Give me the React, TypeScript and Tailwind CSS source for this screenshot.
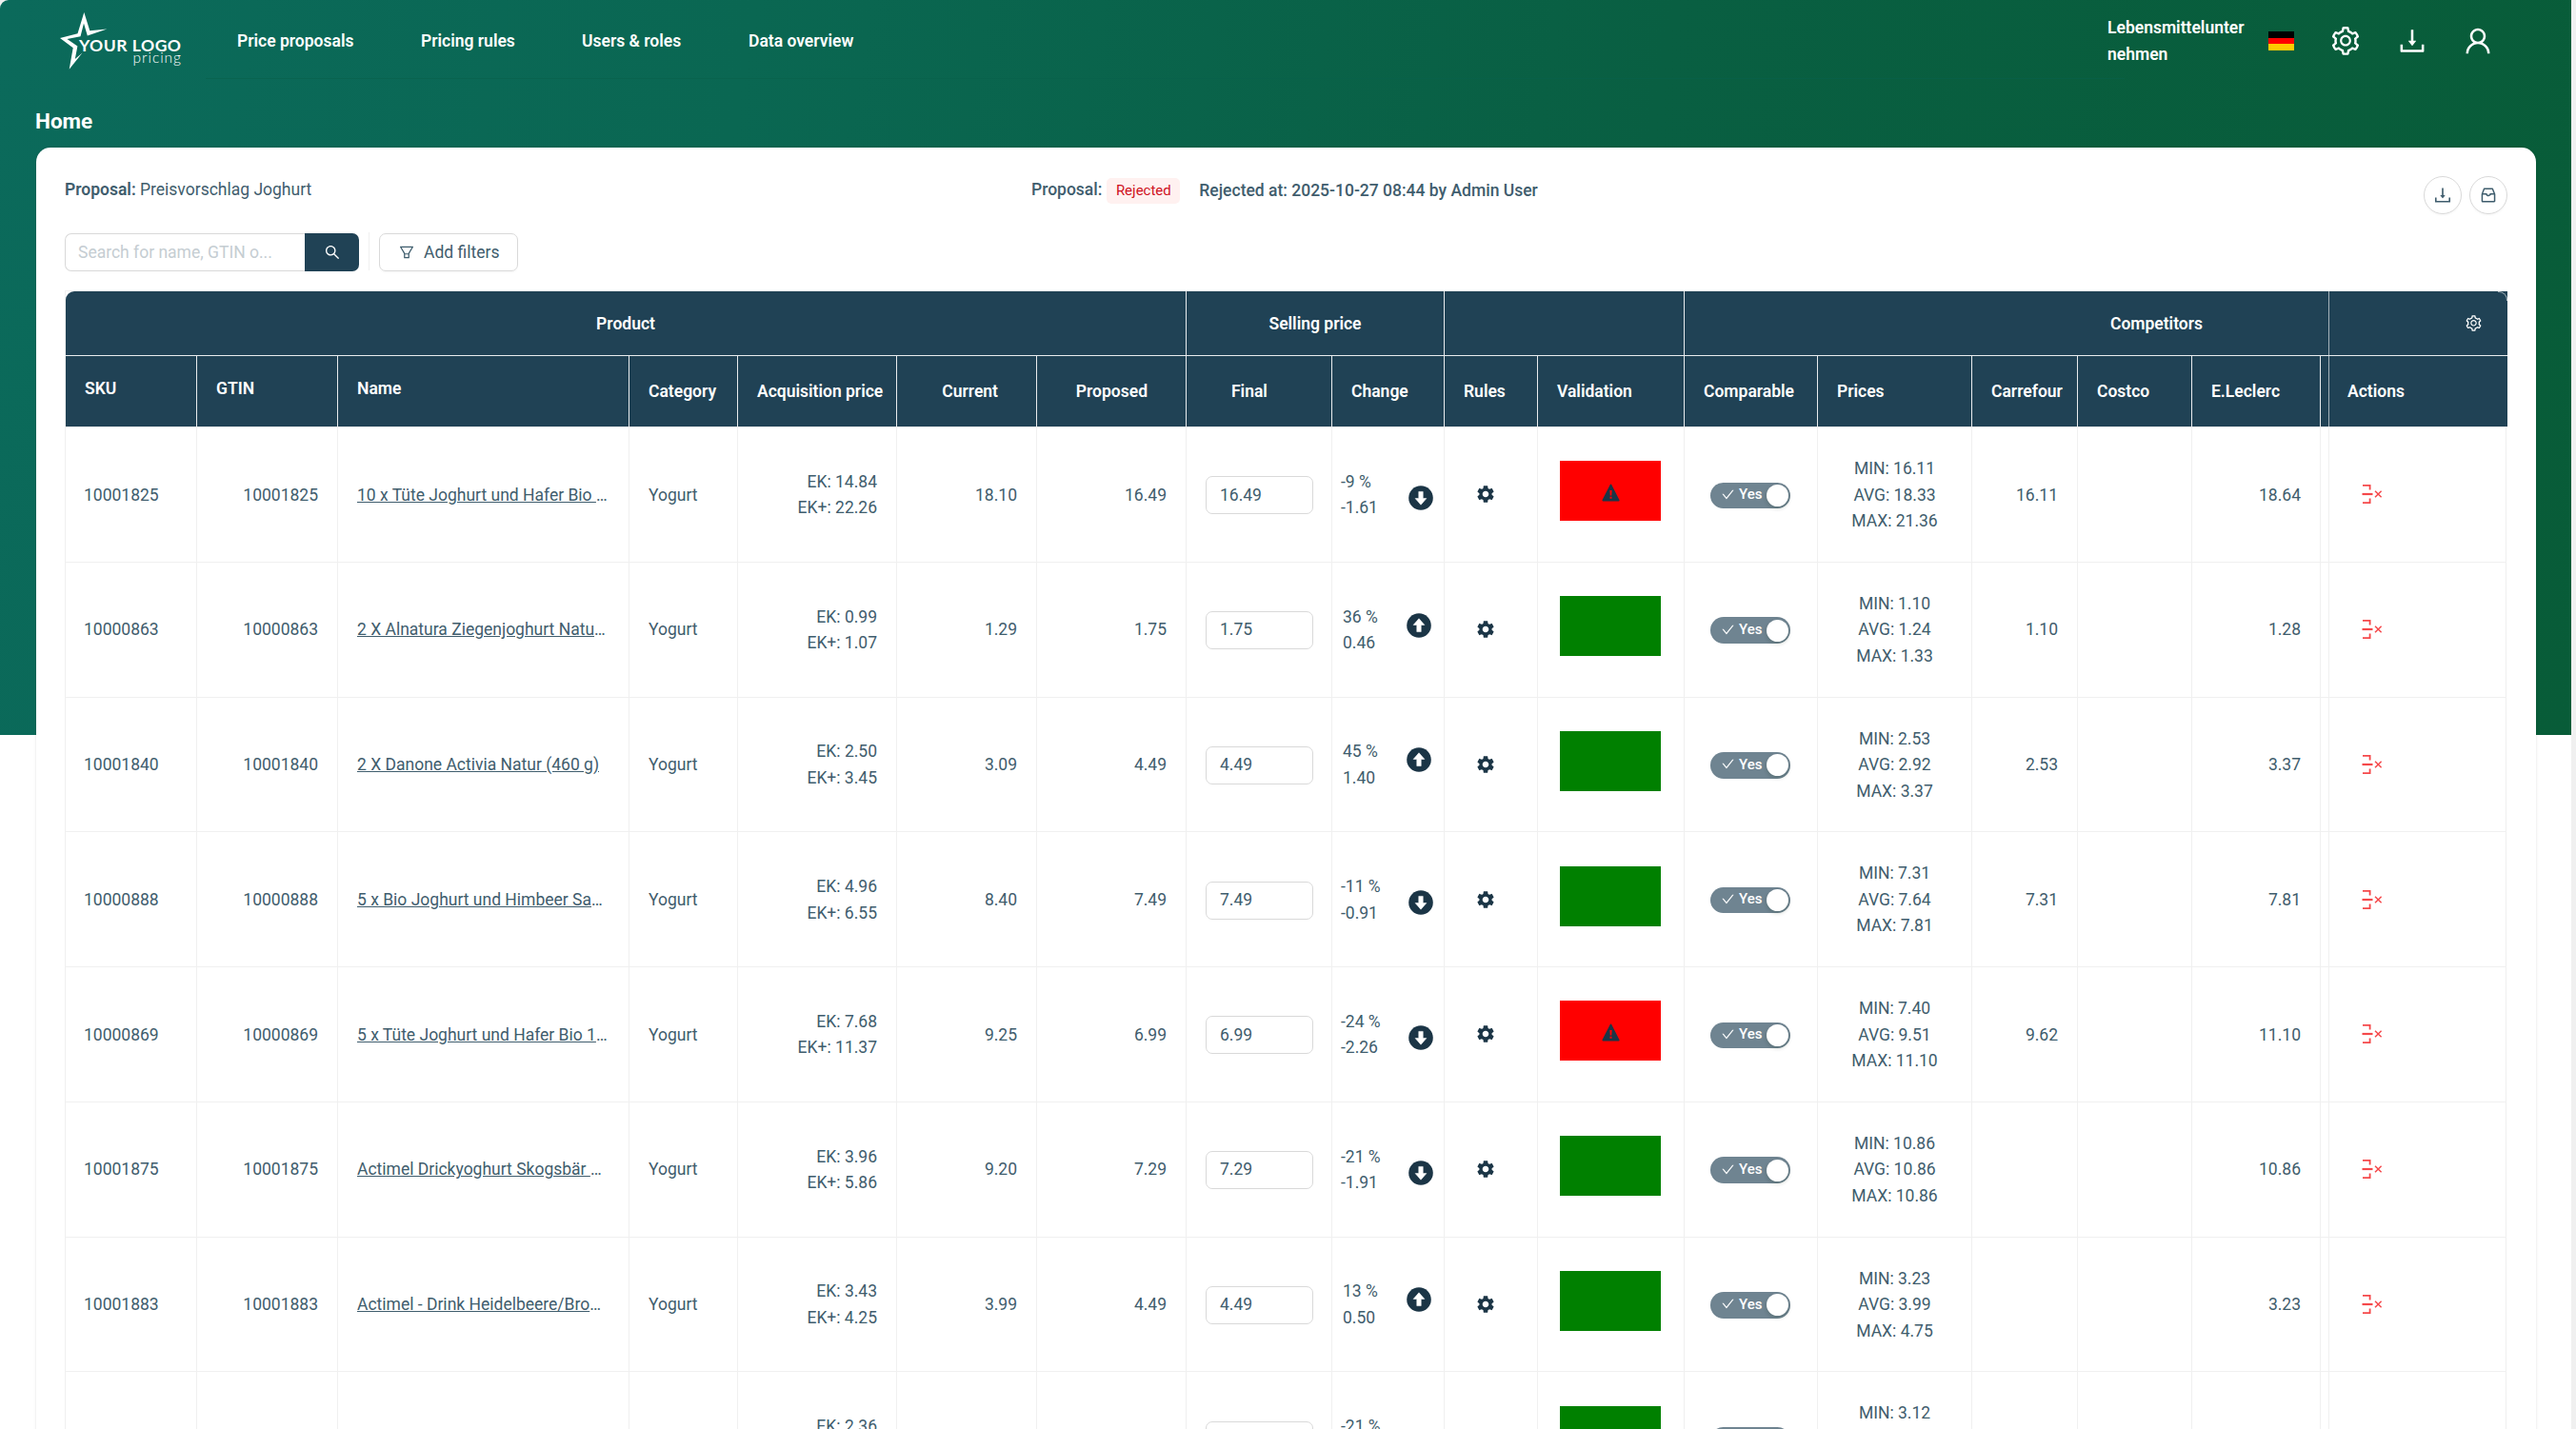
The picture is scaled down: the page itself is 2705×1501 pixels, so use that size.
import type { ReactNode } from "react";
import {
  AiOutlineCheck,
  AiOutlineDownload,
  AiOutlineFilter,
  AiOutlineInbox,
  AiOutlineSearch,
  AiOutlineSetting,
  AiOutlineUser,
} from "react-icons/ai";
import { MdSettings } from "react-icons/md";

type Row = {
  sku: string;
  name: string;
  ek: string;
  ekPlus: string;
  current: string;
  proposed: string;
  percent: string;
  diff: string;
  valid: boolean;
  min: string;
  avg: string;
  max: string;
  carrefour: string;
  leclerc: string;
};

const rows: Row[] = [
  { sku: "10001825", name: "10 x Tüte Joghurt und Hafer Bio ", ek: "14.84", ekPlus: "22.26", current: "18.10", proposed: "16.49", percent: "-9 %", diff: "-1.61", valid: false, min: "16.11", avg: "18.33", max: "21.36", carrefour: "16.11", leclerc: "18.64" },
  { sku: "10000863", name: "2 X Alnatura Ziegenjoghurt Natu", ek: "0.99", ekPlus: "1.07", current: "1.29", proposed: "1.75", percent: "36 %", diff: "0.46", valid: true, min: "1.10", avg: "1.24", max: "1.33", carrefour: "1.10", leclerc: "1.28" },
  { sku: "10001840", name: "2 X Danone Activia Natur (460 g)", ek: "2.50", ekPlus: "3.45", current: "3.09", proposed: "4.49", percent: "45 %", diff: "1.40", valid: true, min: "2.53", avg: "2.92", max: "3.37", carrefour: "2.53", leclerc: "3.37" },
  { sku: "10000888", name: "5 x Bio Joghurt und Himbeer Sa", ek: "4.96", ekPlus: "6.55", current: "8.40", proposed: "7.49", percent: "-11 %", diff: "-0.91", valid: true, min: "7.31", avg: "7.64", max: "7.81", carrefour: "7.31", leclerc: "7.81" },
  { sku: "10000869", name: "5 x Tüte Joghurt und Hafer Bio 1", ek: "7.68", ekPlus: "11.37", current: "9.25", proposed: "6.99", percent: "-24 %", diff: "-2.26", valid: false, min: "7.40", avg: "9.51", max: "11.10", carrefour: "9.62", leclerc: "11.10" },
  { sku: "10001875", name: "Actimel Drickyoghurt Skogsbär ", ek: "3.96", ekPlus: "5.86", current: "9.20", proposed: "7.29", percent: "-21 %", diff: "-1.91", valid: true, min: "10.86", avg: "10.86", max: "10.86", carrefour: "", leclerc: "10.86" },
  { sku: "10001883", name: "Actimel - Drink Heidelbeere/Bro", ek: "3.43", ekPlus: "4.25", current: "3.99", proposed: "4.49", percent: "13 %", diff: "0.50", valid: true, min: "3.23", avg: "3.99", max: "4.75", carrefour: "", leclerc: "3.23" },
  { sku: "", name: "", ek: "2.36", ekPlus: "", current: "", proposed: "", percent: "-21 %", diff: "", valid: true, min: "3.12", avg: "", max: "", carrefour: "", leclerc: "" },
];

const columns =
  "grid grid-cols-[138px_148px_306px_114px_167px_147px_157px_153px_118px_98px_154px_140px_162px_111px_120px_135px_9px_186px]";

export default function App() {
  return (
    <div className="flex h-[1501px] w-[2705px] overflow-hidden bg-[#f0f0f0] font-['Roboto',sans-serif] text-[17.5px] leading-[27.5px] text-[#3f5d6d]">
      <div className="flex w-[2700px] shrink-0 flex-col overflow-hidden rounded-tl-[9px] bg-white bg-[linear-gradient(100deg,#0b6a5b_0%,#0a6752_28%,#095f42_62%,#085c38_100%)] bg-[length:100%_772px] bg-no-repeat">
        <Header />
        <h1 className="mt-[29px] ml-[37px] h-[32px] text-[22.5px] leading-[32px] font-bold text-white">Home</h1>
        <main className="mt-[12px] ml-[38px] h-[1500px] w-[2625px] shrink-0 rounded-t-[15px] bg-white pl-[30px] shadow-[0_0_3px_rgba(0,0,0,0.12)]">
          <ProposalBar />
          <Toolbar />
          <PriceTable />
        </main>
      </div>
    </div>
  );
}

function Header() {
  return (
    <header className="flex h-[82px] shrink-0 items-start pl-[58px] text-white">
      <Logo />
      <nav className="flex h-[83px] w-[2015px] items-center border-b border-[#08604b]/60 pt-[5px] pl-[33px] font-semibold">
        <a className="w-[193px]">Price proposals</a>
        <a className="w-[169px]">Pricing rules</a>
        <a className="w-[175px]">Users &amp; roles</a>
        <a>Data overview</a>
      </nav>
      <div className="-ml-[18px] flex h-[86px] items-center">
        <div className="w-[169px] leading-[28px] font-semibold">
          Lebensmittelunter
          <br />
          nehmen
        </div>
        <Flag />
        <AiOutlineSetting className="ml-[37px] size-[34px]" />
        <AiOutlineDownload className="ml-[36px] size-[34px]" />
        <AiOutlineUser className="ml-[35px] size-[34px]" />
      </div>
    </header>
  );
}

function Logo() {
  return (
    <svg width="158" height="82" viewBox="0 0 158 82" fill="#fff">
      <path d="M5 40L23.5 35.2L30.3 13L36.3 32.3L54.3 30.6L33.8 37.4L30 24.5L26.5 38.3L12.5 41L23.4 48.5L20.8 62L28.5 55.5L14.7 72.8L18.7 50.2Z" />
      <text x="25" y="53.5" textLength="107" className="font-['Lato'] text-[17.5px] font-bold">YOUR LOGO</text>
      <text x="81.5" y="65.5" textLength="50.5" className="font-['Lato'] text-[15.5px] font-light">pricing</text>
    </svg>
  );
}

function Flag() {
  return (
    <div className="flex h-[20px] w-[27px] flex-col">
      <div className="flex-1 bg-black" />
      <div className="flex-1 bg-[#f00]" />
      <div className="flex-1 bg-[#fc0]" />
    </div>
  );
}

function ProposalBar() {
  return (
    <div className="flex h-[90px] items-start pt-[30px]">
      <div className="w-[1015px] pt-px">
        <b className="font-semibold">Proposal:</b> Preisvorschlag Joghurt
      </div>
      <div className="flex w-[1462px] pt-px font-medium">
        <span>Proposal:</span>
        <span className="mt-[1px] ml-[5px] h-[27px] w-[77px] rounded-[5px] bg-[#fff1f0] text-center text-[15px] leading-[26px] font-normal text-[#cf1322]">
          Rejected
        </span>
        <span className="ml-[20px] pt-px">Rejected at: 2025-10-27 08:44 by Admin User</span>
      </div>
      <div className="flex gap-2">
        <RoundButton>
          <AiOutlineDownload className="size-[22px]" />
        </RoundButton>
        <RoundButton>
          <AiOutlineInbox className="size-[20px]" />
        </RoundButton>
      </div>
    </div>
  );
}

function RoundButton({ children }: { children: ReactNode }) {
  return (
    <button className="flex size-[40px] items-center justify-center rounded-full border border-[#d9d9d9] bg-white shadow-[0_2px_0_rgba(0,0,0,0.02)]">
      {children}
    </button>
  );
}

function Toolbar() {
  return (
    <div className="flex h-[60px] items-start">
      <div className="flex h-[40px] w-[252px] items-center rounded-l-[7px] border border-r-0 border-[#d9d9d9] pt-px pl-[13px] text-[#c5cdd2]">
        Search for name, GTIN o...
      </div>
      <button className="flex h-[40px] w-[57px] items-center justify-center rounded-r-[7px] bg-[#204255] text-white">
        <AiOutlineSearch className="size-[18px]" />
      </button>
      <div className="mt-[-1px] ml-[10px] h-[40px] w-px bg-[#f0f0f0]" />
      <button className="ml-[10px] flex h-[40px] w-[146px] items-center rounded-[7px] border border-[#d9d9d9] pl-[19px] shadow-[0_2px_0_rgba(0,0,0,0.02)]">
        <AiOutlineFilter className="size-[18px]" />
        <span className="mt-px ml-[9px]">Add filters</span>
      </button>
    </div>
  );
}

function PriceTable() {
  return (
    <div className="relative w-[2565px] border-t border-l border-[#f0f0f0]">
      <div className="w-[2564px] rounded-tl-[9px] bg-[#204255] font-semibold text-white">
        <div className="flex h-[68px] border-b border-white/90 text-center leading-[68px]">
          <div className="w-[1177px] border-r border-white/90">Product</div>
          <div className="w-[271px] border-r border-white/90">Selling price</div>
          <div className="w-[252px] border-r border-white/90" />
          <div className="w-[677px] border-r border-white/60 pl-[315px]">Competitors</div>
          <div className="flex flex-1 items-center justify-end pr-[26px]">
            <AiOutlineSetting className="size-[19px]" />
          </div>
        </div>
        <div className={`${columns} h-[75px] border-b border-[#f0f0f0]`}>
          <HeadCell raised>SKU</HeadCell>
          <HeadCell raised>GTIN</HeadCell>
          <HeadCell raised>Name</HeadCell>
          <HeadCell>Category</HeadCell>
          <HeadCell>Acquisition price</HeadCell>
          <HeadCell right>Current</HeadCell>
          <HeadCell right>Proposed</HeadCell>
          <div className="flex items-center border-r border-white/90 pt-px pl-[47px]">Final</div>
          <HeadCell>Change</HeadCell>
          <HeadCell>Rules</HeadCell>
          <HeadCell>Validation</HeadCell>
          <HeadCell>Comparable</HeadCell>
          <HeadCell>Prices</HeadCell>
          <HeadCell>Carrefour</HeadCell>
          <HeadCell>Costco</HeadCell>
          <HeadCell>E.Leclerc</HeadCell>
          <div className="border-r border-white/60" />
          <div className="flex items-center pt-px pl-[19px]">Actions</div>
        </div>
      </div>
      <div className="absolute top-0 right-0 size-[10px] rounded-tr-[9px] border-t border-r border-white/60" />
      {rows.map((row, i) => (
        <TableRow key={i} row={row} />
      ))}
    </div>
  );
}

function HeadCell({ children, raised, right }: { children: ReactNode; raised?: boolean; right?: boolean }) {
  return (
    <div
      className={`flex items-center border-r border-white/90 whitespace-nowrap ${raised ? "pb-[5px]" : "pt-px"} ${
        right ? "justify-end pr-[40px]" : "pl-[20px]"
      }`}
    >
      {children}
    </div>
  );
}

function Cell({ children, className = "" }: { children?: ReactNode; className?: string }) {
  return <div className={`flex items-center border-r border-b border-[#f0f0f0] ${className}`}>{children}</div>;
}

function TableRow({ row }: { row: Row }) {
  const down = row.percent.startsWith("-");
  const clipped = row.name && !row.name.endsWith("(460 g)");
  return (
    <div className={`${columns} h-[141.75px]`}>
      <Cell className="pt-[2px] pl-[19px]">{row.sku}</Cell>
      <Cell className="justify-end pt-[2px] pr-[20px]">{row.sku}</Cell>
      <Cell className="pt-[2px] pl-[20px] whitespace-pre">
        <span className="underline">{row.name}</span>
        {clipped && "…"}
      </Cell>
      <Cell className="pt-[2px] pl-[20px]">{row.sku && "Yogurt"}</Cell>
      <Cell className="justify-end pt-[2px] pr-[20px] text-right">
        <div>
          <div>EK: {row.ek}</div>
          <div className="h-[27.5px]">{row.ekPlus && `EK+: ${row.ekPlus}`}</div>
        </div>
      </Cell>
      <Cell className="justify-end pt-[2px] pr-[20px]">{row.current}</Cell>
      <Cell className="justify-end pt-[2px] pr-[20px]">{row.proposed}</Cell>
      <Cell className="pt-[2px] pl-[20px]">
        <div className="flex h-[40px] w-[113px] items-center rounded-[7px] border border-[#d9d9d9] pl-[14px]">
          {row.proposed}
        </div>
      </Cell>
      <Cell className={down ? "pt-[2px] pl-[9px]" : "pt-[2px] pl-[11px]"}>
        <div className={down ? "w-[71px]" : "w-[67px]"}>
          <div>{row.percent}</div>
          <div className="h-[27.5px]">{row.diff}</div>
        </div>
        {down ? <ArrowDown /> : <ArrowUp />}
      </Cell>
      <Cell className="justify-center pr-[12px]">
        <MdSettings className="size-[22px] text-[#1b3546]" />
      </Cell>
      <Cell className="pb-[7px] pl-[23px]">
        {row.valid ? (
          <div className="h-[63px] w-[106px] bg-[#008000]" />
        ) : (
          <div className="flex h-[63px] w-[106px] items-center justify-center bg-[#f00] pt-[3px]">
            <WarningIcon />
          </div>
        )}
      </Cell>
      <Cell className="pl-[27px]">
        <Toggle />
      </Cell>
      <Cell className="justify-center pt-[2px] text-center">
        <div>
          <div>MIN: {row.min}</div>
          <div className="h-[27.5px]">{row.avg && `AVG: ${row.avg}`}</div>
          <div className="h-[27.5px]">{row.max && `MAX: ${row.max}`}</div>
        </div>
      </Cell>
      <Cell className="justify-end pt-[2px] pr-[20px]">{row.carrefour}</Cell>
      <Cell />
      <Cell className="justify-end pt-[2px] pr-[20px]">{row.leclerc}</Cell>
      <Cell />
      <Cell className="pl-[34px]">
        <ExcludeIcon />
      </Cell>
    </div>
  );
}

function Toggle() {
  return (
    <div className="mt-[2px] flex h-[27.5px] w-[84px] items-center rounded-full bg-[#6f8491] pr-[2.5px] pl-[11px] text-white">
      <AiOutlineCheck className="mb-[2px] size-[15px]" />
      <span className="mb-px ml-[4px] flex-1 text-[15px] font-medium">Yes</span>
      <span className="size-[23px] rounded-full bg-white shadow-[0_2px_4px_rgba(0,35,11,0.2)]" />
    </div>
  );
}

function ArrowDown() {
  return (
    <svg className="mt-[5px]" width="26" height="26" viewBox="0 0 26 26">
      <circle cx="13" cy="13" r="12.8" fill="#1b3546" />
      <path d="M10.8 6.4h4.4v7.2h3.6L13 20.2L7.2 13.6h3.6z" fill="#fff" stroke="#fff" strokeWidth="0.6" strokeLinejoin="round" />
    </svg>
  );
}

function ArrowUp() {
  return (
    <svg className="mb-[11px]" width="26" height="26" viewBox="0 0 26 26">
      <circle cx="13" cy="13" r="12.8" fill="#1b3546" />
      <path d="M10.8 19.6h4.4v-7.2h3.6L13 5.8L7.2 12.4h3.6z" fill="#fff" stroke="#fff" strokeWidth="0.6" strokeLinejoin="round" />
    </svg>
  );
}

function WarningIcon() {
  return (
    <svg width="19" height="19" viewBox="0 0 19 19">
      <path d="M9.5 1.3L17.8 17.6H1.2Z" fill="#1b3546" stroke="#1b3546" strokeWidth="1.6" strokeLinejoin="round" />
      <path d="M8.4 7h2.2l-.3 5.4H8.7zM8.5 13.7h2v2h-2z" fill="#f00" />
    </svg>
  );
}

function ExcludeIcon() {
  return (
    <svg width="22" height="22" viewBox="0 0 22 22" fill="none" stroke="#f5484a">
      <path d="M1 1.8h7.6v4.7M1 20.2h7.6v-4.7" strokeWidth="1.8" />
      <path d="M.5 11h11" strokeWidth="2.2" />
      <path d="M14 7.8l6.6 6.4M20.6 7.8L14 14.2" strokeWidth="1.5" />
    </svg>
  );
}
